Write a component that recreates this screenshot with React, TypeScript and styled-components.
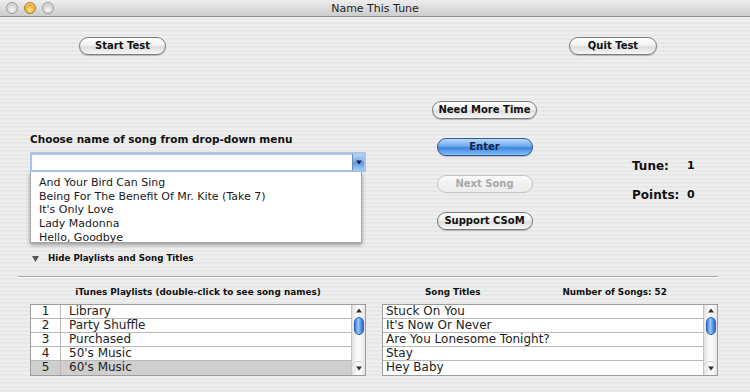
import React from "react";
import styled, { createGlobalStyle, css } from "styled-components";

const Global = createGlobalStyle`
  html, body { margin: 0; padding: 0; background: #ececec; }
  body { font-family: "DejaVu Sans", "Lucida Grande", sans-serif; color: #111; }
  * { box-sizing: border-box; }
`;

const Window = styled.div`
  width: 750px;
  height: 392px;
  overflow: hidden;
  display: flex;
  flex-direction: column;
  background: repeating-linear-gradient(to bottom, #eeeeee 0px, #eeeeee 2px, #e8e8e8 2px, #e8e8e8 4px);
`;

const TitleBar = styled.div`
  height: 17px;
  flex: none;
  display: flex;
  align-items: center;
  position: relative;
  padding-left: 6px;
  gap: 6px;
  background: linear-gradient(to bottom, #ededed 0%, #dddddd 50%, #cdcdcd 100%);
  border-bottom: 1px solid #8e8e8e;
`;

const Light = styled.span<{ $c?: "gold" }>`
  width: 12px;
  height: 12px;
  border-radius: 50%;
  border: 1px solid ${(p) => (p.$c ? "#b8801e" : "#9a9a9a")};
  background: ${(p) =>
    p.$c
      ? "radial-gradient(circle at 50% 70%, #fff0a0 0%, #f3b43a 45%, #c98a1a 100%)"
      : "radial-gradient(circle at 50% 70%, #fafafa 0%, #d8d8d8 50%, #a9a9a9 100%)"};
  box-shadow: inset 0 1px 1px rgba(255,255,255,0.7);
`;

const Title = styled.div`
  position: absolute;
  left: 0;
  right: 0;
  top: 0;
  height: 17px;
  line-height: 17px;
  text-align: center;
  font-size: 11px;
  color: #1e1e1e;
  pointer-events: none;
`;

const TopRow = styled.div`
  display: flex;
  justify-content: space-between;
  padding: 0 93px 0 79px;
  margin-top: 20px;
`;

const Button = styled.button<{ $w: number; $variant?: "default" | "disabled" }>`
  width: ${(p) => p.$w}px;
  height: 18px;
  border-radius: 9px;
  border: 1px solid #7c7c7c;
  font-family: "DejaVu Sans", sans-serif;
  font-weight: bold;
  font-size: 10px;
  line-height: 16px;
  padding: 0;
  color: #111;
  background: linear-gradient(to bottom, #ffffff 0%, #f1f1f1 45%, #dedede 55%, #f6f6f6 100%);
  box-shadow: 0 1px 1px rgba(0, 0, 0, 0.22);
  ${(p) =>
    p.$variant === "default" &&
    css`
      border-color: #2f5a9e;
      color: #102550;
      background: linear-gradient(to bottom, #b9daf9 0%, #6fa9ec 45%, #3d83e0 55%, #86c1f8 100%);
    `}
  ${(p) =>
    p.$variant === "disabled" &&
    css`
      border-color: #c4c4c4;
      color: #a9a9a9;
      background: linear-gradient(to bottom, #fafafa 0%, #f1f1f1 50%, #ececec 100%);
      box-shadow: none;
    `}
`;

const Middle = styled.div`
  display: flex;
  height: 209px;
`;

const LeftCol = styled.div`
  width: 366px;
  padding: 78px 0 0 30px;
  display: flex;
  flex-direction: column;
`;

const BoldLabel = styled.div<{ $size?: number }>`
  font-weight: bold;
  font-size: ${(p) => p.$size ?? 10.5}px;
  line-height: 13px;
  color: #111;
  white-space: nowrap;
`;

const ComboWrap = styled.div`
  position: relative;
  margin-top: 6px;
  width: 336px;
  height: 20px;
`;

const ComboField = styled.div`
  height: 20px;
  background: #fff;
  border: 2px solid #a7c6ea;
  box-shadow: inset 0 1px 1px rgba(0, 0, 0, 0.25);
  display: flex;
  justify-content: flex-end;
  align-items: stretch;
`;

const ComboArrow = styled.div`
  width: 12px;
  background: linear-gradient(to bottom, #b7d4f4 0%, #7caee9 50%, #5c97e0 51%, #9ccaf6 100%);
  border-left: 1px solid #6d8fbd;
  display: flex;
  align-items: center;
  justify-content: center;
`;

const DropList = styled.div`
  position: absolute;
  top: 100%;
  left: 0;
  width: 332px;
  height: 71px;
  background: #fff;
  border: 1px solid #a5a5a5;
  border-top: none;
  box-shadow: 0 2px 4px rgba(0, 0, 0, 0.35);
  padding: 4px 0 0 8px;
  z-index: 2;
`;

const DropItem = styled.div`
  font-size: 11px;
  line-height: 13.7px;
  color: #1a1a1a;
  white-space: nowrap;
`;

const Disclosure = styled.div`
  margin-top: 80px;
  display: flex;
  align-items: center;
  gap: 9px;
  padding-left: 2px;
`;

const ButtonCol = styled.div`
  margin-left: 66px;
  width: 105px;
  padding-top: 46px;
  display: flex;
  flex-direction: column;
  align-items: center;
  gap: 19px;
`;

const Stats = styled.div`
  margin-left: 95px;
  padding-top: 104px;
  display: grid;
  grid-template-columns: 55px auto;
  row-gap: 15px;
  align-content: start;
`;

const StatLabel = styled.div`
  font-weight: bold;
  font-size: 12px;
  line-height: 14px;
`;

const StatValue = styled.div`
  font-weight: bold;
  font-size: 11px;
  line-height: 14px;
`;

const Separator = styled.div`
  margin: 12px 32px 0 18px;
  height: 2px;
  border-top: 1px solid #a9a9a9;
  border-bottom: 1px solid #fbfbfb;
`;

const Bottom = styled.div`
  display: flex;
  gap: 16px;
  padding: 8px 0 0 30px;
`;

const Panel = styled.div`
  width: 336px;
  display: flex;
  flex-direction: column;
  gap: 5px;
`;

const HeaderRow = styled.div<{ $center?: boolean }>`
  display: flex;
  height: 13px;
  align-items: center;
  ${(p) =>
    p.$center
      ? css`
          justify-content: center;
        `
      : css`
          padding-left: 43px;
          gap: 82px;
        `}
`;

const Table = styled.div`
  height: 72px;
  border: 1px solid #9c9c9c;
  background: #fff;
  display: flex;
`;

const Rows = styled.div`
  flex: 1;
  display: flex;
  flex-direction: column;
`;

const Row = styled.div<{ $selected?: boolean }>`
  height: 14px;
  display: flex;
  border-bottom: 1px solid #b9b9b9;
  background: ${(p) => (p.$selected ? "#cfcfcf" : "#fff")};
  &:last-child {
    border-bottom: none;
  }
`;

const NumCell = styled.div`
  width: 30px;
  border-right: 1px solid #b9b9b9;
  text-align: center;
  font-size: 12px;
  line-height: 13px;
  color: #222;
`;

const TextCell = styled.div<{ $pad: number }>`
  flex: 1;
  padding-left: ${(p) => p.$pad}px;
  font-size: 12px;
  line-height: 13px;
  color: #222;
  white-space: nowrap;
  overflow: hidden;
`;

const Scrollbar = styled.div`
  width: 14px;
  border-left: 1px solid #c4c4c4;
  background: linear-gradient(to right, #e2e2e2 0%, #fbfbfb 40%, #fbfbfb 60%, #e6e6e6 100%);
  display: flex;
  flex-direction: column;
  align-items: center;
`;

const ArrowBox = styled.div`
  height: 10px;
  display: flex;
  align-items: center;
  justify-content: center;
`;

const Thumb = styled.div`
  margin-top: 2px;
  width: 10px;
  height: 18px;
  border-radius: 5px;
  border: 1px solid #2f62b5;
  background: linear-gradient(to right, #3d7ee0 0%, #9fcaf6 45%, #6aa5ee 60%, #2f6fd3 100%);
`;

const Track = styled.div`
  flex: 1;
`;

const DownArrowBox = styled.div`
  height: 14px;
  width: 100%;
  border-top: 1px solid #cfcfcf;
  border-radius: 6px 6px 0 0;
  display: flex;
  align-items: center;
  justify-content: center;
`;

const Tri = ({ up }: { up?: boolean }) => (
  <svg width="6" height="5" viewBox="0 0 6 5">
    <polygon points={up ? "3,0.5 6,4.5 0,4.5" : "0,0.5 6,0.5 3,4.5"} fill="#333" />
  </svg>
);

const ScrollBar = () => (
  <Scrollbar>
    <ArrowBox>
      <Tri up />
    </ArrowBox>
    <Thumb />
    <Track />
    <DownArrowBox>
      <Tri />
    </DownArrowBox>
  </Scrollbar>
);

const playlists = ["Library", "Party Shuffle", "Purchased", "50's Music", "60's Music"];
const songs = ["Stuck On You", "It's Now Or Never", "Are You Lonesome Tonight?", "Stay", "Hey Baby"];
const options = [
  "And Your Bird Can Sing",
  "Being For The Benefit Of Mr. Kite (Take 7)",
  "It's Only Love",
  "Lady Madonna",
  "Hello, Goodbye",
];

export default function App() {
  return (
    <>
      <Global />
      <Window>
        <TitleBar>
          <Light />
          <Light $c="gold" />
          <Light />
          <Title>Name This Tune</Title>
        </TitleBar>

        <TopRow>
          <Button $w={87}>Start Test</Button>
          <Button $w={88}>Quit Test</Button>
        </TopRow>

        <Middle>
          <LeftCol>
            <BoldLabel>Choose name of song from drop-down menu</BoldLabel>
            <ComboWrap>
              <ComboField>
                <ComboArrow>
                  <svg width="6" height="5" viewBox="0 0 6 5">
                    <polygon points="0,0.5 6,0.5 3,4.5" fill="#0d2550" />
                  </svg>
                </ComboArrow>
              </ComboField>
              <DropList>
                {options.map((o) => (
                  <DropItem key={o}>{o}</DropItem>
                ))}
              </DropList>
            </ComboWrap>
            <Disclosure>
              <svg width="7" height="6" viewBox="0 0 7 6">
                <polygon points="0,0 7,0 3.5,6" fill="#555" />
              </svg>
              <BoldLabel $size={8.7}>Hide Playlists and Song Titles</BoldLabel>
            </Disclosure>
          </LeftCol>

          <ButtonCol>
            <Button $w={105}>Need More Time</Button>
            <Button $w={96} $variant="default">Enter</Button>
            <Button $w={96} $variant="disabled">Next Song</Button>
            <Button $w={96}>Support CSoM</Button>
          </ButtonCol>

          <Stats>
            <StatLabel>Tune:</StatLabel>
            <StatValue>1</StatValue>
            <StatLabel>Points:</StatLabel>
            <StatValue>0</StatValue>
          </Stats>
        </Middle>

        <Separator />

        <Bottom>
          <Panel>
            <HeaderRow $center>
              <BoldLabel $size={8.9}>iTunes Playlists (double-click to see song names)</BoldLabel>
            </HeaderRow>
            <Table>
              <Rows>
                {playlists.map((p, i) => (
                  <Row key={p} $selected={i === 4}>
                    <NumCell>{i + 1}</NumCell>
                    <TextCell $pad={8}>{p}</TextCell>
                  </Row>
                ))}
              </Rows>
              <ScrollBar />
            </Table>
          </Panel>
          <Panel>
            <HeaderRow>
              <BoldLabel $size={8.8}>Song Titles</BoldLabel>
              <BoldLabel $size={8.8}>Number of Songs: 52</BoldLabel>
            </HeaderRow>
            <Table>
              <Rows>
                {songs.map((s) => (
                  <Row key={s}>
                    <TextCell $pad={3}>{s}</TextCell>
                  </Row>
                ))}
              </Rows>
              <ScrollBar />
            </Table>
          </Panel>
        </Bottom>
      </Window>
    </>
  );
}
